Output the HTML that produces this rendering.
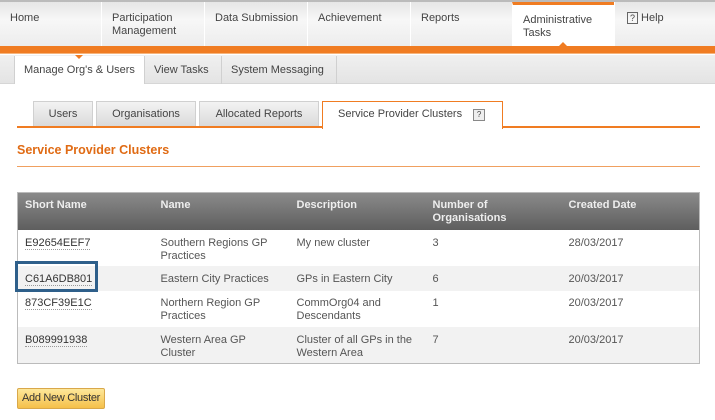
<!DOCTYPE html>
<html><head><style>
*{margin:0;padding:0;box-sizing:border-box}
body{width:715px;height:420px;overflow:hidden;background:#fff;font-family:"Liberation Sans",sans-serif;font-size:11px;color:#555;position:relative}
.a{position:absolute;white-space:nowrap}
.top{left:0;top:0;width:715px;height:47px;background:linear-gradient(#e6e6e6,#f7f7f7 40%,#ececec);border-top:2px solid #bbb}
.tt{top:2px;height:45px;padding:10px 10px;color:#444;font-size:11px;line-height:13px;border-left:1px solid #fff}
.ob{left:0;top:46px;width:715px;height:8px;background:#f07c22;border-bottom:1px solid #f6b47c}
.sub{left:0;top:55px;width:715px;height:29px;background:linear-gradient(#f0f0f0,#e4e4e4);border-bottom:1px solid #d6d6d6}
.st{top:56px;height:28px;padding:8px 9px;color:#444;font-size:11px;border-right:1px solid #d0d0d0}
.tb{top:101px;height:26px;background:linear-gradient(#f3f3f3,#d9d9d9);border:1px solid #d0d0d0;border-bottom:none;padding:6px 0;text-align:center;color:#444;font-size:11px}
td,th{padding:0 7px;vertical-align:top;text-align:left;line-height:13px}
</style></head><body>
<div class="a top"></div>
<div class="a tt" style="left:0;width:101px;border:none">Home</div>
<div class="a tt" style="left:101px;width:103px">Participation<br>Management</div>
<div class="a tt" style="left:204px;width:103px">Data Submission</div>
<div class="a tt" style="left:307px;width:103px">Achievement</div>
<div class="a tt" style="left:410px;width:102px">Reports</div>
<div class="a tt" style="left:512px;width:102px;background:#fff;border-top:3px solid #f07c22;padding-top:9px">Administrative<br>Tasks</div>
<div class="a tt" style="left:614px;width:101px;padding-left:12px"><span style="display:inline-block;border:1px solid #666;width:11px;height:12px;font-size:9px;line-height:10px;text-align:center">?</span> Help</div>
<div class="a ob"></div>
<div class="a" style="left:558px;top:42px;width:0;height:0;border-left:5px solid transparent;border-right:5px solid transparent;border-bottom:5px solid #f07c22"></div>
<div class="a sub"></div>
<div class="a st" style="left:14px;width:131px;background:#fff;border-left:1px solid #d0d0d0">Manage Org's &amp; Users</div>
<div class="a" style="left:75px;top:55px;width:0;height:0;border-left:4px solid transparent;border-right:4px solid transparent;border-top:4px solid #f07c22"></div>
<div class="a st" style="left:145px;width:77px">View Tasks</div>
<div class="a st" style="left:222px;width:115px">System Messaging</div>
<div class="a tb" style="left:33px;width:60px">Users</div>
<div class="a tb" style="left:96px;width:100px">Organisations</div>
<div class="a tb" style="left:199px;width:120px">Allocated Reports</div>
<div class="a" style="left:17px;top:126px;width:683px;height:2px;background:#f07c22"></div>
<div class="a tb" style="left:322px;width:181px;height:28px;background:#fff;border:1px solid #f07c22;border-bottom:none;text-align:left;padding-left:15px">Service Provider Clusters <span style="display:inline-block;border:1px solid #888;background:#eee;width:12px;height:12px;font-size:8px;line-height:10px;text-align:center;margin-left:8px">?</span></div>
<div class="a" style="left:17px;top:143px;color:#e06b14;font-weight:bold;font-size:12.5px">Service Provider Clusters</div>
<div class="a" style="left:17px;top:166px;width:683px;height:1px;background:#f0a060"></div>
<table class="a" style="left:17px;top:192px;width:683px;border-collapse:collapse;border:1px solid #bbb;font-size:11px">
<tr style="height:37px;background:linear-gradient(#8a8a8a,#5e5e5e);color:#eee;font-weight:bold"><th style="width:136px;padding-top:6px">Short Name</th><th style="width:136px;padding-top:6px">Name</th><th style="width:136px;padding-top:6px">Description</th><th style="width:136px;padding-top:6px">Number of<br>Organisations</th><th style="padding-top:6px">Created Date</th></tr>
<tr style="height:36px"><td style="padding-top:7px;color:#333"><span style="border-bottom:1px dotted #999">E92654EEF7</span></td><td style="padding-top:7px">Southern Regions GP<br>Practices</td><td style="padding-top:7px">My new cluster</td><td style="padding-top:7px">3</td><td style="padding-top:7px">28/03/2017</td></tr>
<tr style="height:25px;background:#f2f2f2"><td style="padding-top:7px;color:#333"><span style="border-bottom:1px dotted #999">C61A6DB801</span></td><td style="padding-top:7px">Eastern City Practices</td><td style="padding-top:7px">GPs in Eastern City</td><td style="padding-top:7px">6</td><td style="padding-top:7px">20/03/2017</td></tr>
<tr style="height:36px"><td style="padding-top:6px;color:#333"><span style="border-bottom:1px dotted #999">873CF39E1C</span></td><td style="padding-top:6px">Northern Region GP<br>Practices</td><td style="padding-top:6px">CommOrg04 and<br>Descendants</td><td style="padding-top:6px">1</td><td style="padding-top:6px">20/03/2017</td></tr>
<tr style="height:37px;background:#f2f2f2"><td style="padding-top:7px;color:#333"><span style="border-bottom:1px dotted #999">B089991938</span></td><td style="padding-top:7px">Western Area GP<br>Cluster</td><td style="padding-top:7px">Cluster of all GPs in the<br>Western Area</td><td style="padding-top:7px">7</td><td style="padding-top:7px">20/03/2017</td></tr>
</table>
<div class="a" style="left:15px;top:261px;width:83px;height:31px;border:3px solid #2e5f8a"></div>
<div class="a" style="left:17px;top:388px;width:88px;height:21px;background:linear-gradient(#fde79a,#f5c04a);border:1px solid #d9a84a;border-radius:2px;color:#333;font-size:11px;text-align:center;line-height:19px;letter-spacing:-0.3px">Add New Cluster</div>
</body></html>
